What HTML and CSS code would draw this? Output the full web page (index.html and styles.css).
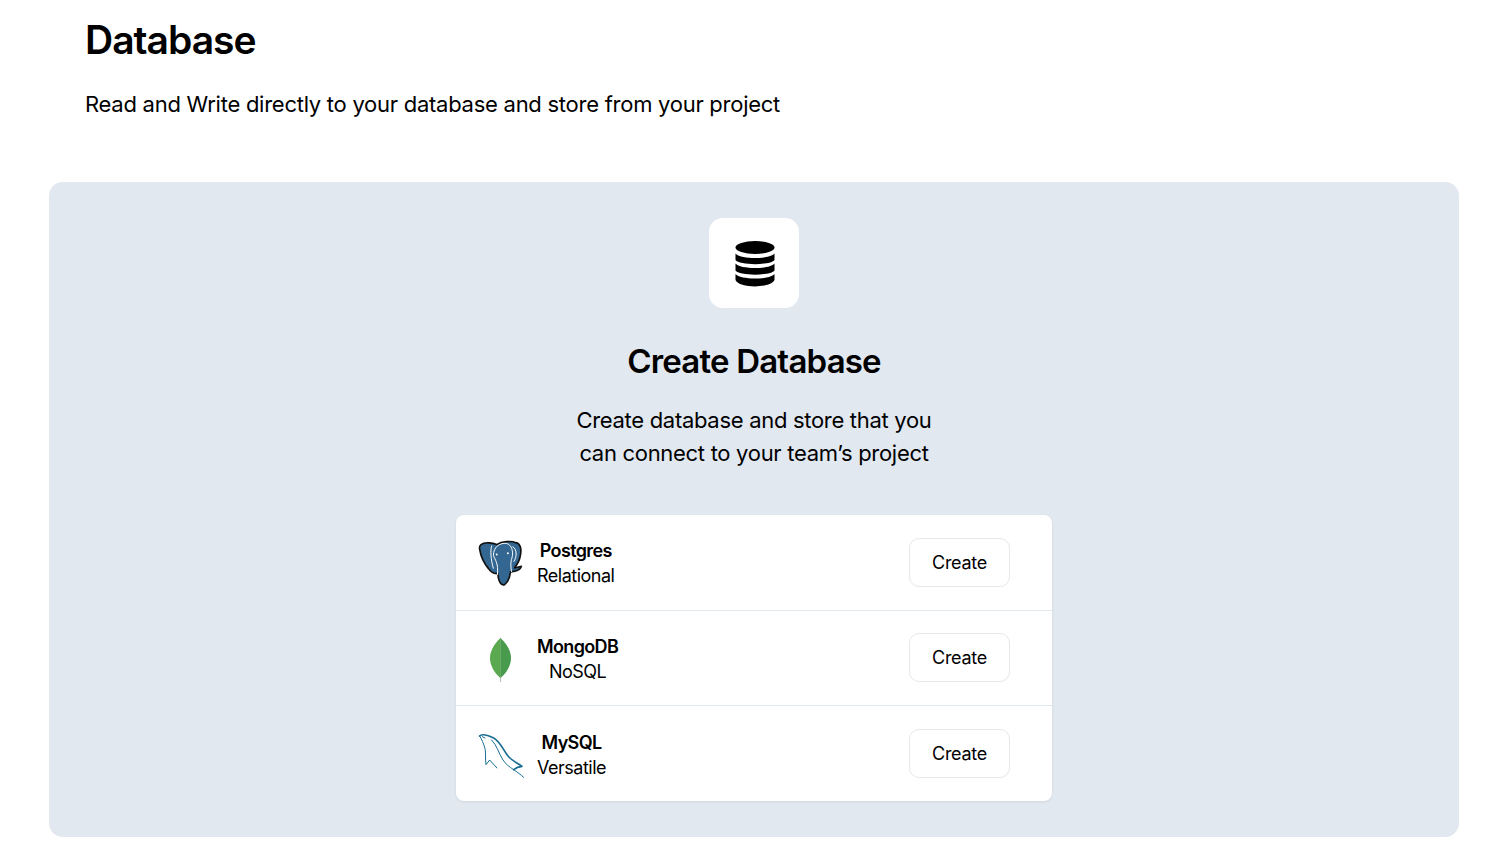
FILE: index.html
```html
<!DOCTYPE html>
<html lang="en">
<head>
<meta charset="utf-8">
<title>Database</title>
<link rel="stylesheet" href="styles.css">
</head>
<body>
<main class="page">
  <header class="intro">
    <h1 class="intro-title">Database</h1>
    <p class="intro-text">Read and Write directly to your database and store from your project</p>
  </header>
  <section class="panel">
    <div class="panel-icon">
      <svg class="db-icon" width="40" height="46" viewBox="0 0 40 46">
        <ellipse cx="20" cy="6.5" rx="19.5" ry="6.5" fill="#000"/>
        <path d="M.5 12.5C5 18.5 35 18.5 39.5 12.5V19C36 24.500 4 24.500 .5 19Z" fill="#000"/>
        <path d="M.5 22.500C5 28.500 35 28.500 39.500 22.500V29.500C36 35 4 35 .5 29.500Z" fill="#000"/>
        <path d="M.5 33C5 39 35 39 39.500 33V39C36 47.500 4 47.500 .5 39Z" fill="#000"/>
      </svg>
    </div>
    <h2 class="panel-title">Create Database</h2>
    <p class="panel-text">Create database and store that you<br>can connect to your team’s project</p>
    <div class="db-list">
      <div class="db-row">
        <svg class="db-logo" width="47" height="47" viewBox="0 0 143 143">
          <path d="M12 14C25 4 50 10 60 14C75 4 105 2 118 8C132 10 136 27 132 47C130 62 122 75 114 85L135 80C132 92 118 96 102 97C100 112 96 127 84 136C72 139 66 128 63 102C52 103 42 98 35 87C24 74 12 55 8 28C7 22 8 17 12 14Z" fill="#336791" stroke="#111" stroke-width="5" stroke-linejoin="round"/>
          <path d="M45 17C40 30 42 60 50 87M50 47C50 20 70 10 85 10C100 10 110 25 108 47C106 60 100 62 105 97M50 47C55 62 66 70 62 107M108 20C122 28 122 50 112 66" fill="none" stroke="#fff" stroke-width="3"/>
          <circle cx="60" cy="44" r="3" fill="#fff"/>
          <circle cx="94" cy="40" r="3" fill="#fff"/>
        </svg>
        <div class="db-label">
          <span class="db-name">Postgres</span>
          <span class="db-kind">Relational</span>
        </div>
        <button class="db-create" type="button">Create</button>
      </div>
      <div class="db-row">
        <svg class="db-logo" width="47" height="47" viewBox="0 0 47 47">
          <path d="M23.500 2V46" stroke="#b9c2b8" stroke-width="1.200" fill="none"/>
          <path d="M23.500 2C16 9 13 16 13 22C13 29 17 37 23.500 42Z" fill="#5aa94f"/>
          <path d="M23.500 2C31 9 34 16 34 22C34 29 30 37 23.500 42Z" fill="#489a4c"/>
        </svg>
        <div class="db-label">
          <span class="db-name">MongoDB</span>
          <span class="db-kind">NoSQL</span>
        </div>
        <button class="db-create" type="button">Create</button>
      </div>
      <div class="db-row">
        <svg class="db-logo" width="47" height="47" viewBox="0 0 141 141">
          <path d="M8 12C12 7 24 6 50 18C68 28 76 48 90 68C100 84 120 92 135 103C124 104 116 108 110 113" fill="none" stroke="#1a6d92" stroke-width="5" stroke-linejoin="round" stroke-linecap="round"/>
          <path d="M110 113C120 120 132 128 140 136M8 12C14 22 20 34 24 50C27 62 24 80 27 98L38 84L60 108M16 14L24 18M44 24C60 40 64 62 78 84C86 96 96 104 110 113" fill="none" stroke="#1a6d92" stroke-width="3" stroke-linejoin="round" stroke-linecap="round"/>
        </svg>
        <div class="db-label">
          <span class="db-name">MySQL</span>
          <span class="db-kind">Versatile</span>
        </div>
        <button class="db-create" type="button">Create</button>
      </div>
    </div>
  </section>
</main>
</body>
</html>
```
FILE: styles.css
```css
* { box-sizing: border-box; }
html, body { margin: 0; padding: 0; background: #fff; }
body { font-family: "Inter", "Noto Sans", sans-serif; color: #000; }
.page { width: 1512px; height: 852px; overflow: hidden; padding: 0 53px 0 49px; }
.intro { padding: 16px 0 0 36px; height: 182px; }
.intro-title { margin: 0; font-size: 39px; line-height: 48px; font-weight: 600; letter-spacing: -1px; }
.intro-text { margin: 16px 0 0; font-size: 22px; line-height: 48px; font-weight: 400; letter-spacing: -0.26px; }
.panel { height: 655px; background: #e2e8f0; border-radius: 14px; padding-top: 36px; display: flex; flex-direction: column; align-items: center; }
.panel-icon { width: 90px; height: 90px; background: #fff; border-radius: 14px; display: flex; align-items: center; justify-content: center; }
.db-icon { margin: 2px 0 0 1px; }
.panel-title { margin: 33px 0 0; font-size: 33px; line-height: 40px; font-weight: 600; letter-spacing: -0.8px; }
.panel-text { margin: 23px 0 0; font-size: 22px; line-height: 33px; text-align: center; letter-spacing: -0.3px; }
.db-list { margin-top: 45px; width: 596px; background: #fff; border-radius: 8px; box-shadow: 0 1px 3px rgba(0,0,0,.08); }
.db-row { height: 95.670px; padding: 0 42px 0 21px; display: flex; align-items: center; border-bottom: 1px solid #e2e8f0; }
.db-row:last-child { height: 94.660px; border-bottom: 0; }
.db-logo { flex: none; margin-top: 3px; }
.db-label { margin-left: 13px; padding-top: 2px; display: flex; flex-direction: column; align-items: center; line-height: 25px; }
.db-name { font-size: 18px; font-weight: 600; letter-spacing: -0.65px; }
.db-kind { font-size: 18px; letter-spacing: -0.5px; }
.db-create { margin-left: auto; width: 101px; height: 49px; background: #fff; border: 1px solid #e5e7eb; border-radius: 10px; font: 400 18px "Inter", sans-serif; letter-spacing: -0.3px; color: #000; }
```
